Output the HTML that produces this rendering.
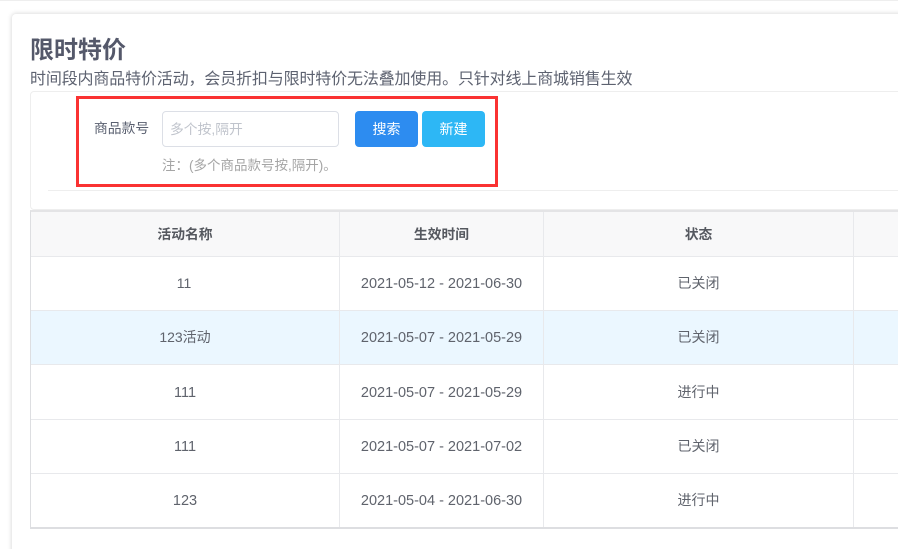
<!DOCTYPE html>
<html lang="zh">
<head>
<meta charset="utf-8">
<title>限时特价</title>
<style>
html,body{margin:0;padding:0;width:898px;height:549px;overflow:hidden;background:#fff}
body{position:relative;font-family:"Liberation Sans","Noto Sans CJK SC",sans-serif;color:#5f636e}
div{position:absolute;box-sizing:border-box}
.c{text-align:center;white-space:nowrap;font-size:14px;line-height:20px;color:#5f636c}
.d{font-size:14.5px;margin-top:1px}
.h{font-weight:bold;font-size:13.8px;color:#55585f;top:225px}
.hl{height:1px;left:31px;width:867px;background:#e8e9ec}
.vl{width:1px;top:212px;height:315px;background:#e8e9ec}
.btn{top:111px;width:63px;height:36px;border-radius:4px;color:#fff;font-size:14px;line-height:36px;text-align:center}
</style>
</head>
<body>
<div style="left:0;top:0;width:898px;height:1px;background:#eeeeee"></div>
<div style="left:12px;top:14px;width:900px;height:560px;background:#fff;border-radius:4px;box-shadow:0 0 4px 1px rgba(0,0,0,.13)"></div>

<div style="left:30px;top:36px;font-size:24px;line-height:30px;font-weight:bold;color:#54586a;white-space:nowrap">限时特价</div>
<div style="left:30px;top:70px;font-size:16px;letter-spacing:-.15px;line-height:20px;color:#5d6270;white-space:nowrap">时间段内商品特价活动，会员折扣与限时特价无法叠加使用。只针对线上商城销售生效</div>

<div style="left:30px;top:91px;width:880px;height:119px;border:1px solid #eeeeee;border-radius:4px"></div>
<div style="left:48px;top:190px;width:850px;height:1px;background:#eeeeee"></div>
<div style="left:76px;top:96px;width:422px;height:91px;border:3px solid #fa3232"></div>

<div style="left:94px;top:120px;font-size:13.8px;line-height:18px;color:#5a6070;white-space:nowrap">商品款号</div>
<div style="left:162px;top:111px;width:177px;height:36px;border:1px solid #dcdfe6;border-radius:4px;background:#fff;padding-left:7px;font-size:13.8px;line-height:35px;color:#c0c4cc;white-space:nowrap">多个按,隔开</div>
<div class="btn" style="left:355px;background:#2d8cf0">搜索</div>
<div class="btn" style="left:422px;background:#2db7f5">新建</div>
<div style="left:162px;top:157px;font-size:13.5px;line-height:18px;color:#a5a5a5;white-space:nowrap">注：(多个商品款号按,隔开)。</div>

<!-- table -->
<div style="left:30px;top:210px;width:868px;height:319px;border-top:2px solid #e4e4e6;border-left:1px solid #dddee1;border-bottom:2px solid #dddee1"></div>
<div style="left:31px;top:212px;width:867px;height:44px;background:#f8f8f9"></div>
<div style="left:31px;top:311px;width:867px;height:53px;background:#ebf7ff"></div>
<div class="hl" style="top:256px"></div>
<div class="hl" style="top:310px"></div>
<div class="hl" style="top:364px"></div>
<div class="hl" style="top:419px"></div>
<div class="hl" style="top:473px"></div>
<div class="vl" style="left:339px"></div>
<div class="vl" style="left:543px"></div>
<div class="vl" style="left:853px"></div>

<div class="c h" style="left:31px;width:308px">活动名称</div>
<div class="c h" style="left:340px;width:203px">生效时间</div>
<div class="c h" style="left:544px;width:309px">状态</div>

<div class="c" style="left:31px;width:306px;top:273px">11</div>
<div class="c d" style="left:340px;width:203px;top:273px">2021-05-12 - 2021-06-30</div>
<div class="c" style="left:544px;width:309px;top:273px">已关闭</div>

<div class="c" style="left:31px;width:308px;top:327px">123活动</div>
<div class="c d" style="left:340px;width:203px;top:327px">2021-05-07 - 2021-05-29</div>
<div class="c" style="left:544px;width:309px;top:327px">已关闭</div>

<div class="c d" style="left:31px;width:308px;top:382px">111</div>
<div class="c d" style="left:340px;width:203px;top:382px">2021-05-07 - 2021-05-29</div>
<div class="c" style="left:544px;width:309px;top:382px">进行中</div>

<div class="c d" style="left:31px;width:308px;top:436px">111</div>
<div class="c d" style="left:340px;width:203px;top:436px">2021-05-07 - 2021-07-02</div>
<div class="c" style="left:544px;width:309px;top:436px">已关闭</div>

<div class="c d" style="left:31px;width:308px;top:490px">123</div>
<div class="c d" style="left:340px;width:203px;top:490px">2021-05-04 - 2021-06-30</div>
<div class="c" style="left:544px;width:309px;top:490px">进行中</div>
</body>
</html>
